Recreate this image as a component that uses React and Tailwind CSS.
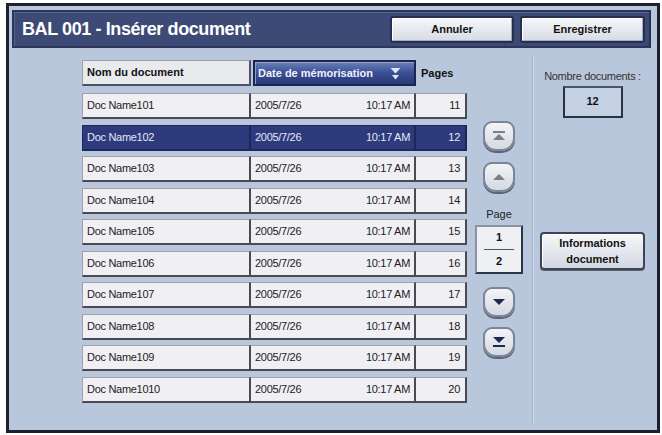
import { Fragment } from 'react';

const rows = Array.from({ length: 10 }, (_, i) => ({
  name: `Doc Name10${i + 1}`,
  date: '2005/7/26',
  time: '10:17 AM',
  pages: 11 + i,
}));

const sans = "font-['Liberation_Sans',Arial,sans-serif]";

function TopButton({ children, className = '' }) {
  return (
    <button
      className={`h-[27px] rounded-[3px] border-2 border-[#26304e] bg-gradient-to-b from-[#f6f7fa] to-[#d6dbe4] shadow-[inset_1px_1px_0_#ffffff,inset_-1px_-1px_0_#a4acbb] text-[11px] font-bold text-[#111] ${className}`}
    >
      {children}
    </button>
  );
}

function ScrollButton({ children, className = '' }) {
  return (
    <button
      className={`w-[32px] h-[30px] flex items-center justify-center rounded-t-[9px] rounded-b-[13px] border-2 border-[#7b8598] bg-gradient-to-b from-[#f3f4f7] to-[#d5d9e1] shadow-[0_2px_0_#5c6578] ${className}`}
    >
      {children}
    </button>
  );
}

function Cell({ selected, className = '', children }) {
  return (
    <div
      className={`h-full flex items-center border border-r-2 border-b-2 ${
        selected
          ? 'bg-[#2d3b7d] text-[#e4e8f4] border-[#1d275a]'
          : 'bg-[#f0eff3] text-[#222] border-[#a0a0a8] border-r-[#4a4a52] border-b-[#4a4a52]'
      } ${className}`}
    >
      {children}
    </div>
  );
}

export default function App() {
  return (
    <div className={`w-[662px] h-[435px] bg-white pt-[3px] pl-[6px] ${sans}`}>
      <div className="w-[654px] h-[430px] border-[3px] border-[#1e2030] bg-[#b8c7db] flex flex-col">
        {/* title bar */}
        <div className="mt-[4px] ml-[3px] mr-[6px] h-[38px] bg-[#3d4a76] border-2 border-[#2c355a] border-r-[#27304f] flex items-center pl-[8px] pr-[4px] shadow-[inset_1px_1px_0_#55628c]">
          <h1 className="text-[18px] font-bold tracking-[-0.4px] text-white flex-1">
            BAL 001 - Insérer document
          </h1>
          <TopButton className="w-[124px]">Annuler</TopButton>
          <TopButton className="w-[125px] ml-[6px]">Enregistrer</TopButton>
        </div>

        <div className="flex flex-1 pt-[12px] pl-[73px]">
          {/* table */}
          <div className="w-[386px] flex flex-col">
            <div className="h-[26px] grid grid-cols-[169px_165px_52px]">
              <div className="h-full flex items-center pl-[4px] text-[11px] font-bold text-[#111] bg-[#e9eaee] border border-[#9aa0ac] border-r-2 border-b-2 border-r-[#4c5263] border-b-[#4c5263]">
                Nom du document
              </div>
              <div className="ml-[2px] h-full flex items-center justify-between pl-[3px] pr-[13px] text-[11px] font-bold text-[#eef2fb] bg-gradient-to-b from-[#6c80b8] via-[#3a4e93] to-[#2a3a78] border-2 border-[#1c2450] shadow-[inset_1px_1px_0_#8ea0d0]">
                <span>Date de mémorisation</span>
                <svg width="11" height="15" viewBox="0 0 11 15">
                  <polygon points="0.5,2 10.5,2 5.5,7.5" fill="#dfe6f6" />
                  <polygon points="2,9 9,9 5.5,13.5" fill="#dfe6f6" />
                </svg>
              </div>
              <div className="h-full flex items-center pl-[5px] text-[11px] font-bold text-[#111]">
                Pages
              </div>
            </div>
            <div className="mt-[7px] flex flex-col gap-[5.5px]">
              {rows.map((r, i) => {
                const sel = i === 1;
                return (
                  <div key={r.name} className="h-[26px] grid grid-cols-[169px_165px_51px] text-[11px] tracking-[-0.3px]">
                    <Cell selected={sel} className="pl-[4px]">{r.name}</Cell>
                    <Cell selected={sel} className="justify-between pl-[4px] pr-[4px] border-l-0">
                      <span>{r.date}</span>
                      <span>{r.time}</span>
                    </Cell>
                    <Cell selected={sel} className="justify-end pr-[5px] border-l-0">{r.pages}</Cell>
                  </div>
                );
              })}
            </div>
          </div>

          {/* scroll column */}
          <div className="ml-[7px] w-[48px] flex flex-col items-center pt-[61px]">
            <ScrollButton>
              <svg width="14" height="12" viewBox="0 0 14 12">
                <rect x="1" y="1" width="12" height="2" fill="#7c7f86" />
                <polygon points="7,4 13,10 1,10" fill="#7c7f86" />
              </svg>
            </ScrollButton>
            <ScrollButton className="mt-[11px]">
              <svg width="14" height="8" viewBox="0 0 14 8">
                <polygon points="7,1 13,7 1,7" fill="#7c7f86" />
              </svg>
            </ScrollButton>
            <div className="mt-[14px] text-[11px] text-[#222]">Page</div>
            <div className="mt-[2px] w-[48px] h-[49px] bg-[#eef0f4] border-2 border-[#2d3448] border-t-[#8a92a4] border-l-[#8a92a4] flex flex-col items-center justify-center text-[11px] font-bold text-[#111]">
              <span>1</span>
              <span className="my-[3px] w-[30px] h-px bg-[#555]" />
              <span>2</span>
            </div>
            <ScrollButton className="mt-[13px]">
              <svg width="14" height="8" viewBox="0 0 14 8">
                <polygon points="1,1 13,1 7,7" fill="#1e2850" />
              </svg>
            </ScrollButton>
            <ScrollButton className="mt-[10px]">
              <svg width="14" height="12" viewBox="0 0 14 12">
                <polygon points="1,1 13,1 7,7" fill="#1e2850" />
                <rect x="1" y="9" width="12" height="2" fill="#1e2850" />
              </svg>
            </ScrollButton>
          </div>

          {/* separator */}
          <div className="ml-[9px] mt-[-4px] mb-[6px] w-[2px] border-l border-[#a7b5c9] border-r border-r-[#d0dae8]" />

          {/* right panel */}
          <div className="flex-1 flex flex-col items-center pt-[8px] pr-[6px]">
            <div className="text-[11px] tracking-[-0.3px] text-[#333]">Nombre documents :</div>
            <div className="mt-[1px] w-[60px] h-[32px] bg-[#c4d1e2] border-2 border-[#2b3143] border-t-[#4c5466] flex items-center justify-center text-[11px] font-bold text-[#111]">
              12
            </div>
            <button className="mt-[114px] w-[105px] h-[38px] rounded-[4px] border-2 border-[#3d4456] bg-gradient-to-b from-[#f6f7fa] to-[#d3d8e1] shadow-[inset_1px_1px_0_#ffffff,0_1px_0_#5b6374] text-[11px] font-bold leading-[16px] text-[#111]">
              Informations<br />document
            </button>
          </div>
        </div>
      </div>
    </div>
  );
}
